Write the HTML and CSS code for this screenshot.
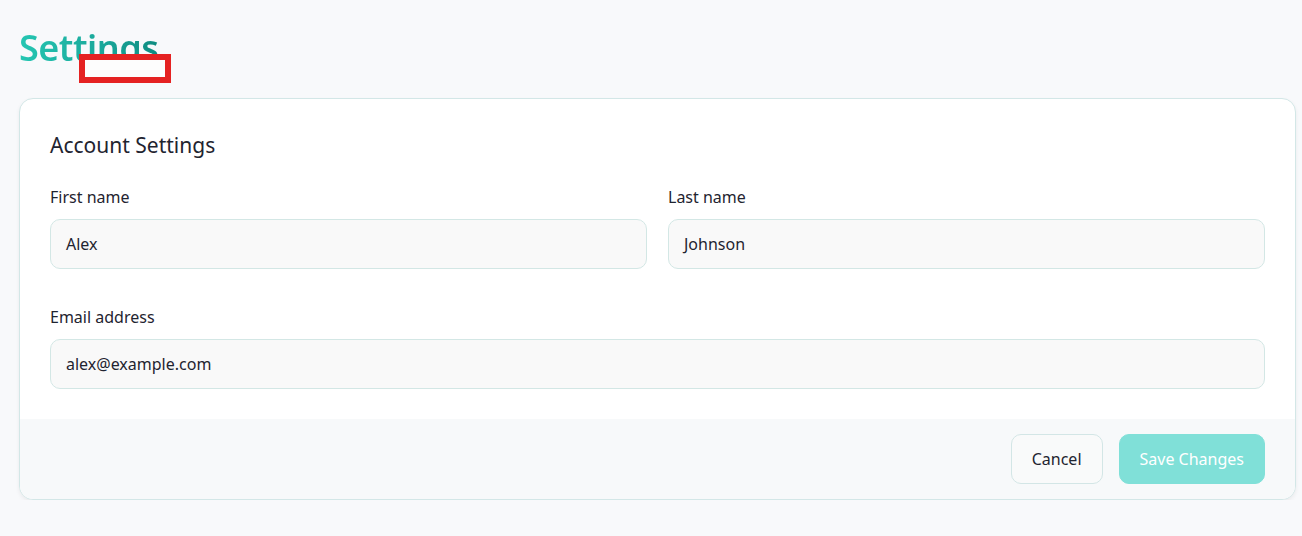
FILE: index.html
```html
<!DOCTYPE html>
<html lang="en">
<head>
<meta charset="utf-8">
<title>Settings</title>
<link rel="stylesheet" href="styles.css">
</head>
<body>
<main class="page">
  <div class="title-wrap">
    <h1 class="title">Settings</h1>
    <span class="mark"></span>
  </div>
  <section class="card">
    <div class="card-body">
      <h2 class="card-title">Account Settings</h2>
      <div class="row two">
        <label class="field">
          <span class="label">First name</span>
          <span class="input">Alex</span>
        </label>
        <label class="field">
          <span class="label">Last name</span>
          <span class="input">Johnson</span>
        </label>
      </div>
      <div class="row">
        <label class="field">
          <span class="label">Email address</span>
          <span class="input">alex@example.com</span>
        </label>
      </div>
    </div>
    <div class="card-footer">
      <button class="btn btn-cancel" type="button">Cancel</button>
      <button class="btn btn-save" type="button">Save Changes</button>
    </div>
  </section>
</main>
</body>
</html>
```
FILE: styles.css
```css
* { box-sizing: border-box; }
html, body { margin: 0; padding: 0; }
body {
  background: #f8f9fb;
  font-family: "Noto Sans", "Open Sans", sans-serif;
  color: #1f2430;
}
.page {
  padding: 24px 6px 0 19px;
}
.title-wrap {
  position: relative;
  height: 74px;
}
.title {
  margin: 0;
  font-size: 36px;
  line-height: 48px;
  font-weight: 600;
  letter-spacing: -0.5px;
  background: linear-gradient(90deg, #25c6b2 0%, #1aa79a 60%, #0e8b80 100%);
  -webkit-background-clip: text;
  background-clip: text;
  color: transparent;
  display: inline-block;
}
.mark {
  position: absolute;
  left: 60px;
  top: 30px;
  width: 92px;
  height: 29px;
  border: 6px solid #e52222;
  background: #fdfdfd;
}
.card {
  background: #ffffff;
  border: 1px solid #d3e7e7;
  border-radius: 14px;
  overflow: hidden;
  box-shadow: 0 2px 4px rgba(0, 0, 0, 0.06);
}
.card-body {
  padding: 31px 30px 30px 30px;
}
.card-title {
  margin: 0 0 27px;
  font-size: 21px;
  line-height: 30px;
  font-weight: 400;
  color: #1f2430;
}
.row {
  display: flex;
  gap: 21px;
}
.row + .row { margin-top: 38px; }
.field {
  flex: 1;
  display: flex;
  flex-direction: column;
}
.label {
  font-size: 16px;
  line-height: 20px;
  margin-bottom: 12px;
  color: #1f2430;
}
.input {
  height: 50px;
  border: 1px solid #d3e7e5;
  border-radius: 10px;
  background: #f9f9f9;
  padding: 0 15px;
  display: flex;
  align-items: center;
  font-size: 16px;
  color: #1f2430;
}
.card-footer {
  background: #f7f9fa;
  padding: 15px 30px;
  display: flex;
  justify-content: flex-end;
  gap: 16px;
}
.btn {
  height: 50px;
  border-radius: 10px;
  font-family: inherit;
  font-size: 16px;
  padding: 0 20px;
  cursor: pointer;
}
.btn-cancel {
  background: #f9fafa;
  border: 1px solid #d3e6e6;
  color: #1f2430;
}
.btn-save {
  background: #80e0d8;
  border: 1px solid #80e0d8;
  color: #ffffff;
}
```
